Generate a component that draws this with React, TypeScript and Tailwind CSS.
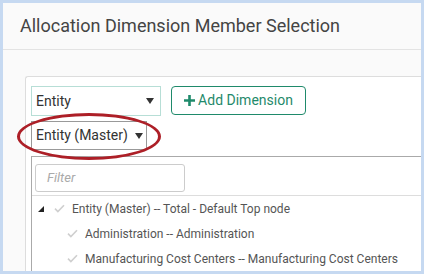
import React from "react";

function Check({ className }: { className?: string }) {
  return (
    <svg viewBox="0 0 12 10" className={className} width="11" height="9">
      <path d="M1 5.2 L4.2 8.4 L11 1.4" fill="none" stroke="#cfcfcf" strokeWidth="1.8" />
    </svg>
  );
}

function Caret() {
  return (
    <svg width="8" height="6" viewBox="0 0 8 6" className="shrink-0">
      <polygon points="0,0 8,0 4,6" fill="#333" />
    </svg>
  );
}

const rows = [
  { depth: 0, label: "Entity (Master) -- Total - Default Top node" },
  { depth: 1, label: "Administration -- Administration" },
  { depth: 1, label: "Manufacturing Cost Centers -- Manufacturing Cost Centers" },
];

export default function App() {
  return (
    <div
      className="w-[424px] h-[274px] bg-[#c6d9f1] p-[3px] overflow-hidden"
      style={{ fontFamily: "Roboto, 'Liberation Sans', sans-serif" }}
    >
      <div className="w-full h-full bg-[#fafafa] flex flex-col overflow-hidden">
        <div className="h-[47px] shrink-0 flex items-center px-[17px] border-b border-[#e3e3e3]">
          <h1 className="text-[18px] text-[#444] leading-none">Allocation Dimension Member Selection</h1>
        </div>

        <div className="flex-1 pl-[22px] pt-[26px] flex flex-col min-h-0">
          <div className="flex-1 bg-white border-t border-l border-[#ddd] rounded-tl-[3px] pl-[5px] pt-[9px] flex flex-col min-h-0">
            <div className="flex items-start">
              <div className="w-[130px] h-[30px] border border-[#b7ded6] bg-white flex items-center justify-between pl-[4px] pr-[6px] text-[14px] text-[#333]">
                <span>Entity</span>
                <Caret />
              </div>
              <button className="ml-[10px] w-[135px] h-[29px] border border-[#1f8a6b] rounded-[4px] flex items-center justify-center gap-[3px] text-[14px] text-[#1f8a6b]">
                <svg width="11" height="11" viewBox="0 0 11 11">
                  <path d="M5.5 0 V11 M0 5.5 H11" stroke="#1f8a6b" strokeWidth="2.6" />
                </svg>
                <span>Add Dimension</span>
              </button>
            </div>

            <div className="relative mt-[5px] w-[116px] h-[29px]">
              <div className="w-full h-full border border-[#999] bg-white flex items-center pl-[4px] gap-[7px] text-[14px] text-[#333] whitespace-nowrap">
                <span>Entity (Master)</span>
                <Caret />
              </div>
              <div className="absolute left-[-14px] top-[-8px] w-[144px] h-[47px] rounded-[50%] border-[3px] border-[#ad1f27]" />
            </div>

            <div className="mt-[6px] flex-1 border-t border-l border-[#aaa] flex flex-col">
              <div className="pl-[3px] pt-[7px] pb-[3px] border-b border-[#ddd]">
                <div className="w-[150px] h-[28px] border border-[#ccc] rounded-[3px] flex items-center pl-[11px] text-[13px] italic text-[#aaa]">
                  Filter
                </div>
              </div>
              {rows.map((r, i) => (
                <div
                  key={i}
                  className={`h-[25px] flex items-center text-[12px] text-[#555] whitespace-nowrap ${
                    r.depth === 0 ? "pl-[6px]" : "pl-[35px]"
                  }`}
                >
                  {r.depth === 0 && (
                    <svg width="6" height="6" viewBox="0 0 6 6" className="mr-[10px]">
                      <polygon points="6,0 6,6 0,6" fill="#222" />
                    </svg>
                  )}
                  <Check className="mr-[7px]" />
                  <span>{r.label}</span>
                </div>
              ))}
            </div>
          </div>
        </div>
      </div>
    </div>
  );
}
